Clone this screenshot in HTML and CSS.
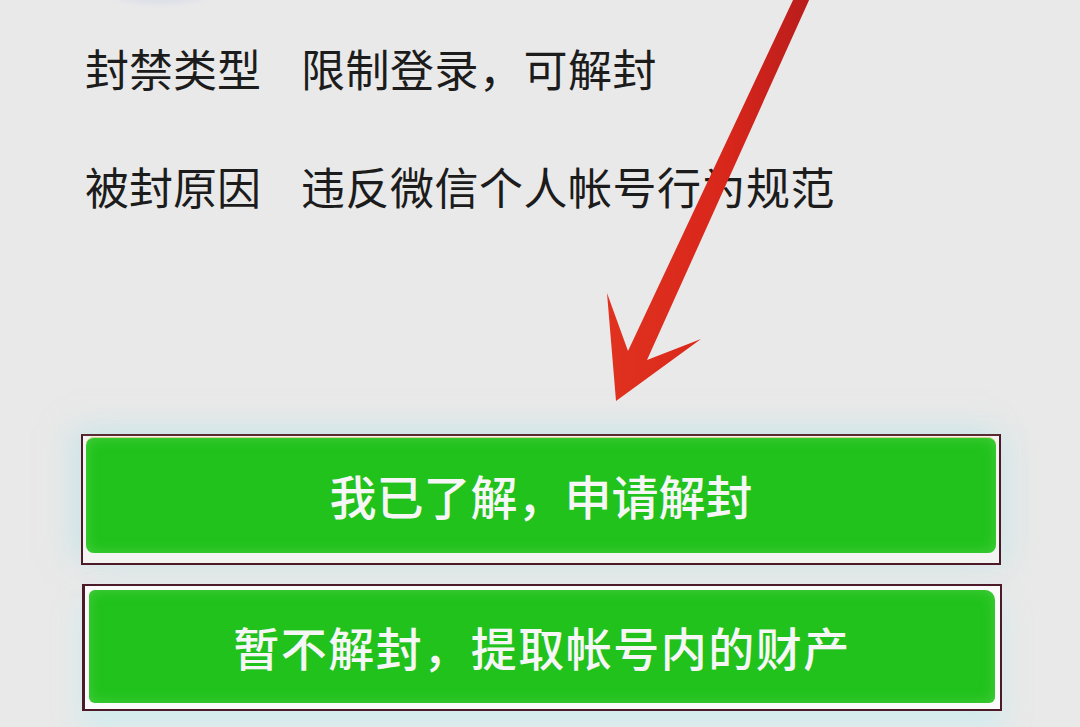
FILE: index.html
```html
<!DOCTYPE html>
<html lang="zh-CN">
<head>
<meta charset="utf-8">
<title>封禁信息</title>
<link rel="stylesheet" href="styles.css">
</head>
<body>
<div class="page">
  <div class="info">
    <div class="row"><span class="label">封禁类型</span><span class="value">限制登录，可解封</span></div>
    <div class="row"><span class="label">被封原因</span><span class="value">违反微信个人帐号行为规范</span></div>
  </div>
  <div class="actions">
    <div class="frame frame-one"><div class="btn btn-one">我已了解，申请解封</div></div>
    <div class="frame frame-two"><div class="btn btn-two">暂不解封，提取帐号内的财产</div></div>
  </div>
  <svg class="overlay" width="1080" height="727" viewBox="0 0 1080 727" aria-hidden="true">
    <defs>
      <linearGradient id="red" x1="0" y1="0" x2="1" y2="0">
        <stop offset="0" stop-color="#e0321f"/>
        <stop offset="0.6" stop-color="#d8261b"/>
        <stop offset="1" stop-color="#b81d1c"/>
      </linearGradient>
      <filter id="soft" x="-20%" y="-20%" width="140%" height="140%">
        <feGaussianBlur stdDeviation="3"/>
      </filter>
    </defs>
    <ellipse cx="160" cy="-16" rx="58" ry="20" fill="#dcdfe8" filter="url(#soft)"/>
    <polygon points="794,-2 810,-2 647,360 701,339 616,401 607,293 628,351" fill="url(#red)"/>
  </svg>
</div>
</body>
</html>
```
FILE: styles.css
```css
html, body {
  margin: 0;
  padding: 0;
}
body {
  background: #e9e9e9;
  font-family: "Noto Sans CJK SC", "Noto Sans", sans-serif;
}
.page {
  position: relative;
  width: 1080px;
  height: 727px;
  overflow: hidden;
}
.info {
  display: flex;
  flex-direction: column;
  gap: 58px;
  padding: 38px 0 0 85px;
}
.row {
  display: flex;
  align-items: center;
  height: 60px;
  line-height: 60px;
  font-size: 44px;
  color: #1c1c1c;
}
.label {
  width: 216px;
  letter-spacing: 0;
}
.value {
  letter-spacing: 0.5px;
}
.actions {
  display: flex;
  flex-direction: column;
  gap: 19px;
  margin-top: 218px;
}
.frame {
  box-sizing: border-box;
  border: 2px solid #4d1a28;
  background: #f3f3f1;
}
.frame-one {
  margin-left: 81px;
  width: 920px;
  height: 131px;
  padding: 1px 3px 10px 3px;
  border-top-color: #5a2a30;
  box-shadow: -12px -6px 26px rgba(190, 226, 232, 0.55), 14px 0 24px rgba(200, 232, 236, 0.45);
}
.frame-two {
  margin-left: 82px;
  width: 920px;
  height: 127px;
  padding: 4px 5px 6px 4px;
  border-left-width: 3px;
  background: #fbfbfb;
  box-shadow: 0 18px 26px rgba(200, 236, 240, 0.7);
}
.btn {
  box-sizing: border-box;
  height: 100%;
  display: flex;
  align-items: center;
  justify-content: center;
  background: #20c21b;
  color: #f6f6f6;
  font-weight: 500;
  border-radius: 8px;
  box-shadow: inset 0 0 14px rgba(120, 220, 110, 0.45);
}
.btn-one {
  font-size: 47px;
  letter-spacing: 0;
  border-top: 1px solid #d8d28a;
  padding-bottom: 2px;
}
.btn-two {
  font-size: 46px;
  letter-spacing: 1.5px;
  border-radius: 6px 10px 6px 6px;
  padding-bottom: 2px;
}
.overlay {
  position: absolute;
  left: 0;
  top: 0;
  pointer-events: none;
}
```
